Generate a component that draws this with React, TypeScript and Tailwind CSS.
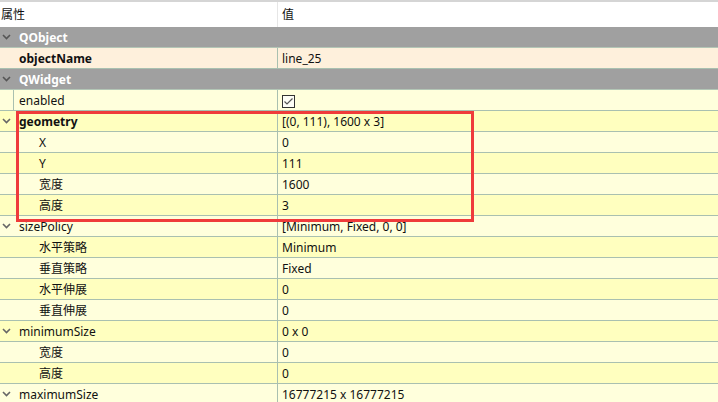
import React from "react";

type Row =
  | { kind: "group"; name: string }
  | {
      kind: "prop";
      name: string;
      value?: string;
      bold?: boolean;
      level?: number;
      arrow?: boolean;
      bg: "peach" | "light" | "dark";
      check?: boolean;
      mark?: boolean;
    };

const rows: Row[] = [
  { kind: "group", name: "QObject" },
  { kind: "prop", name: "objectName", value: "line_25", bold: true, bg: "peach" },
  { kind: "group", name: "QWidget" },
  { kind: "prop", name: "enabled", bg: "light", check: true, mark: true },
  { kind: "prop", name: "geometry", value: "[(0, 111), 1600 x 3]", bold: true, arrow: true, bg: "dark" },
  { kind: "prop", name: "X", value: "0", level: 1, bg: "light" },
  { kind: "prop", name: "Y", value: "111", level: 1, bg: "dark" },
  { kind: "prop", name: "宽度", value: "1600", level: 1, bg: "light" },
  { kind: "prop", name: "高度", value: "3", level: 1, bg: "dark" },
  { kind: "prop", name: "sizePolicy", value: "[Minimum, Fixed, 0, 0]", arrow: true, bg: "light" },
  { kind: "prop", name: "水平策略", value: "Minimum", level: 1, bg: "dark" },
  { kind: "prop", name: "垂直策略", value: "Fixed", level: 1, bg: "light" },
  { kind: "prop", name: "水平伸展", value: "0", level: 1, bg: "dark" },
  { kind: "prop", name: "垂直伸展", value: "0", level: 1, bg: "light" },
  { kind: "prop", name: "minimumSize", value: "0 x 0", arrow: true, bg: "dark" },
  { kind: "prop", name: "宽度", value: "0", level: 1, bg: "light" },
  { kind: "prop", name: "高度", value: "0", level: 1, bg: "dark" },
  { kind: "prop", name: "maximumSize", value: "16777215 x 16777215", arrow: true, bg: "light" },
];

const bgClass = {
  peach: "bg-[#fef0dc]",
  light: "bg-[#ffffdc]",
  dark: "bg-[#ffffbf]",
};

function Chevron({ color }: { color: string }) {
  return (
    <svg width="9" height="6" viewBox="0 0 9 6" className="absolute left-[2px] top-[7px]">
      <path d="M1 1 L4.5 4.5 L8 1" fill="none" stroke={color} strokeWidth="1.6" />
    </svg>
  );
}

function CheckBox() {
  return (
    <span className="mt-px flex h-[13px] w-[13px] items-center justify-center border border-[#333] bg-[#fdfdf6]">
      <svg width="11" height="9" viewBox="0 0 11 9">
        <path d="M1.5 4.5 L4 7 L9.5 1.5" fill="none" stroke="#555" strokeWidth="1.2" />
      </svg>
    </span>
  );
}

export default function App() {
  return (
    <div
      className="relative h-[402px] w-[718px] overflow-hidden bg-[#ffffdc] text-[12px] text-[#111]"
      style={{ fontFamily: '"Noto Sans", "Noto Sans CJK SC", sans-serif' }}
    >
      {/* шапка */}
      <div className="flex h-[27px] border-t-2 border-[#d5d5d5] bg-white">
        <div className="flex w-[278px] items-center border-r border-[#e6e6e6] pl-[1px]">属性</div>
        <div className="flex items-center pl-[4px]">值</div>
      </div>

      {rows.map((r, i) =>
        r.kind === "group" ? (
          <div key={i} className="relative flex h-[21px] border-b border-[#b3c6b6] bg-[#a0a0a0]">
            <Chevron color="#555" />
            <span className="flex items-center pl-[19px] pt-px font-bold leading-none text-white">{r.name}</span>
          </div>
        ) : (
          <div key={i} className={`relative flex h-[21px] border-b border-[#a9c0b0] ${bgClass[r.bg]}`}>
            {r.arrow && <Chevron color="#666" />}
            {r.mark && <span className="absolute left-[13px] top-0 h-[20px] w-px bg-[#a9c0b0]" />}
            <div
              className={`flex w-[278px] items-center border-r border-[#a9c0b0] pt-px leading-none ${
                r.level ? "pl-[39px]" : "pl-[19px]"
              } ${r.bold ? "font-bold" : ""}`}
            >
              {r.name}
            </div>
            <div className="flex items-center pl-[4px] pt-px leading-none">
              {r.check ? <CheckBox /> : r.value}
            </div>
          </div>
        )
      )}

      {/* выделение */}
      <div className="pointer-events-none absolute left-[16px] top-[111px] h-[111px] w-[458px] border-[3px] border-[#ef3b3b]" />
    </div>
  );
}
